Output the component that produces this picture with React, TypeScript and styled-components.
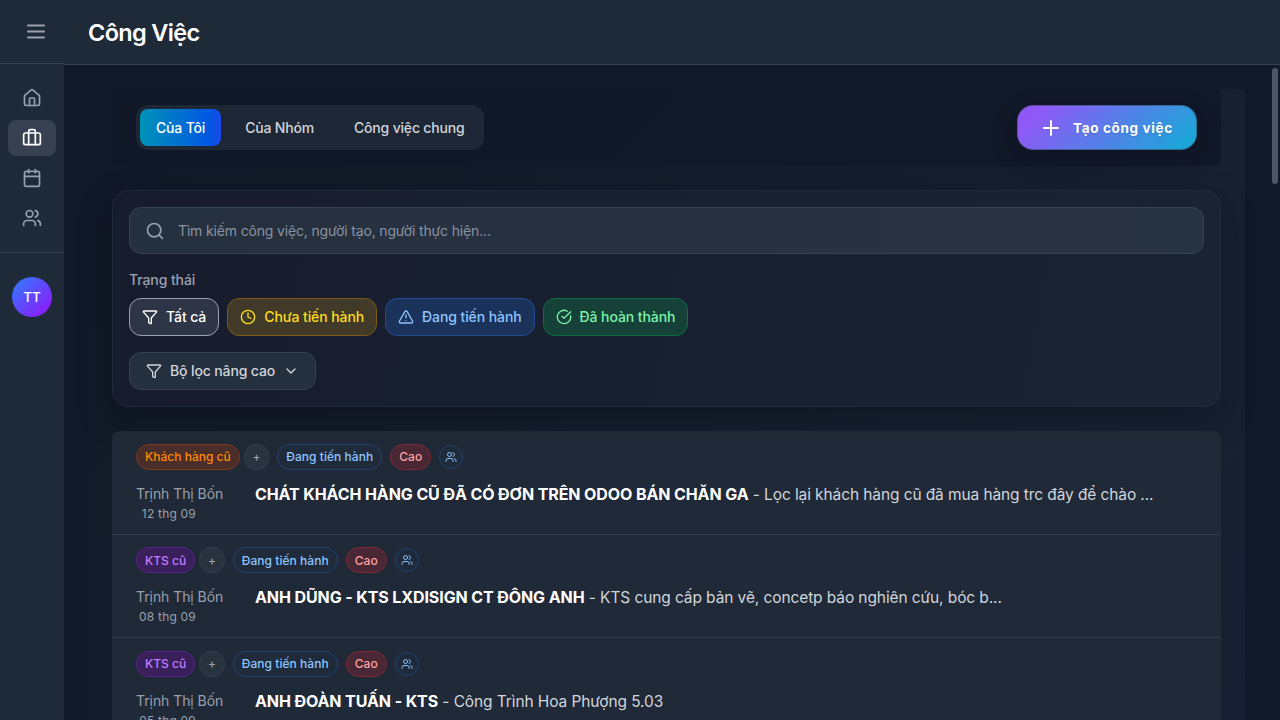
import React from "react";
import styled, { createGlobalStyle, css } from "styled-components";
import {
  House, Calendar, Users, Search, Funnel, Clock,
  TriangleAlert, CircleCheckBig, ChevronDown,
} from "lucide-react";

const Global = createGlobalStyle`
  * { box-sizing: border-box; }
  body { margin: 0; background: #111827; font-family: Inter, "Noto Sans", sans-serif; color: #fff; overflow: hidden; }
  button, input { font-family: inherit; margin: 0; }
  button { cursor: pointer; }
  svg { flex-shrink: 0; display: block; }
`;

const Shell = styled.div`
  display: flex;
  width: 100vw;
  height: 100vh;
  overflow: hidden;
`;

const Sidebar = styled.aside`
  display: flex;
  flex-direction: column;
  width: 64px;
  flex-shrink: 0;
  background: #1f2a39;
`;

const MenuButton = styled.button`
  display: flex;
  align-items: center;
  height: 64px;
  padding: 1px 0 0 24px;
  border: 0;
  border-bottom: 1px solid #374151;
  background: none;
  color: #9ca3af;
`;

const Nav = styled.nav`
  display: flex;
  flex-direction: column;
  gap: 4px;
  padding: 16px 8px;
  border-bottom: 1px solid #374151;
`;

const NavItem = styled.button<{ $active?: boolean }>`
  display: flex;
  align-items: center;
  justify-content: center;
  height: 36px;
  border: 0;
  border-radius: 8px;
  background: ${(p) => (p.$active ? "#374151" : "transparent")};
  color: ${(p) => (p.$active ? "#fff" : "#99a1af")};
`;

const Avatar = styled.div`
  display: flex;
  align-items: center;
  justify-content: center;
  width: 40px;
  height: 40px;
  margin: 24px auto 0;
  border-radius: 50%;
  background: linear-gradient(135deg, #2b7fff, #9810fa);
  font-size: 13.5px;
  font-weight: 500;
`;

const Page = styled.div`
  display: flex;
  flex-direction: column;
  flex: 1;
  min-width: 0;
`;

const Header = styled.header`
  display: flex;
  align-items: center;
  height: 65px;
  flex-shrink: 0;
  padding: 2px 24px 0;
  border-bottom: 1px solid #374151;
  background: #1f2a39;
`;

const Title = styled.h1`
  margin: 0;
  font-size: 23.5px;
  line-height: 32px;
  font-weight: 600;
  letter-spacing: -0.65px;
`;

const Body = styled.div`
  display: flex;
  flex: 1;
  min-height: 0;
`;

const Content = styled.main`
  flex: 1;
  min-width: 0;
  padding: 24px;
  overflow: hidden;
  background: #111827;
`;

const Track = styled.div`
  width: 11px;
  padding: 3px 2px 0 3px;
  background: #101929;
`;

const Thumb = styled.div`
  height: 116px;
  border-radius: 3px;
  background: #4b5563;
`;

const Board = styled.div`
  display: flex;
  flex-direction: column;
  gap: 24px;
  min-height: 1400px;
  padding: 0 24px;
  background: linear-gradient(135deg, #111827 0, #121a28 260px, #182131 950px, #141f31 1300px);
`;

const Toolbar = styled.div`
  display: flex;
  align-items: center;
  justify-content: space-between;
  height: 77px;
  padding: 0 24px;
  border-radius: 8px;
  background: rgba(17, 24, 39, 0.85);
`;

const Tabs = styled.div`
  display: flex;
  gap: 8px;
  padding: 4px;
  border-radius: 12px;
  background: #1e2735;
`;

const Tab = styled.button<{ $active?: boolean }>`
  height: 37px;
  padding: 0 16px;
  border: 0;
  border-radius: 8px;
  background: ${(p) => (p.$active ? "linear-gradient(90deg, #0092b8, #0058e2 85%, #1a49e8)" : "none")};
  color: ${(p) => (p.$active ? "#fff" : "#d1d5db")};
  font-size: 14px;
  font-weight: 500;
  letter-spacing: -0.18px;
`;

const CreateButton = styled.button`
  display: flex;
  align-items: center;
  gap: 10px;
  width: 180px;
  height: 45px;
  padding: 0 0 0 21px;
  border: 1px solid rgba(55, 70, 95, 0.55);
  border-radius: 16px;
  background: linear-gradient(135deg, #9158f8 12%, #1ba6d9 92%) border-box;
  box-shadow: 0 8px 24px rgba(10, 14, 24, 0.3);
  color: #fff;
  font-size: 13.5px;
  font-weight: 700;
  letter-spacing: 0.64px;
  white-space: nowrap;
  text-shadow: 0 1px 2px rgba(0, 0, 0, 0.15);
`;

const FilterCard = styled.section`
  display: flex;
  flex-direction: column;
  align-items: flex-start;
  height: 217px;
  flex-shrink: 0;
  padding: 16px;
  border: 1px solid #1f2a39;
  border-radius: 16px;
  background: linear-gradient(100deg, #171c2d, #182030 45%, #1a2333);
  box-shadow: 0 12px 32px rgba(8, 12, 20, 0.4);
`;

const SearchBox = styled.label`
  display: flex;
  align-items: center;
  gap: 13px;
  align-self: stretch;
  height: 47px;
  padding: 0 15px;
  border: 1px solid #36424f;
  border-radius: 12px;
  background: linear-gradient(90deg, #25303e, #283141 50%, #283341);
  color: #99a1af;
`;

const SearchInput = styled.input`
  flex: 1;
  padding: 0;
  border: 0;
  outline: 0;
  background: none;
  color: #fff;
  font-size: 14px;
  letter-spacing: -0.16px;
  &::placeholder { color: #8a93a1; opacity: 1; }
`;

const FieldLabel = styled.div`
  margin: 16px 0 8px;
  color: #99a1af;
  font-size: 14px;
  line-height: 20px;
  font-weight: 500;
  letter-spacing: -0.1px;
`;

const PillRow = styled.div`
  display: flex;
  gap: 8px;
`;

const tones = {
  all: css`color: #fff; background: #2e3546; border-color: #99a1af;`,
  pending: css`color: #fddc20; background: #423a28; border-color: #7b5b16;`,
  running: css`color: #8ec5ff; background: #1b325b; border-color: #234a93;`,
  done: css`color: #7bf1a8; background: #154138; border-color: #0d6f41;`,
  more: css`color: #d1d5db; background: #24303e; border-color: #36424f;`,
};

const Pill = styled.button<{ $tone: keyof typeof tones }>`
  display: flex;
  align-items: center;
  gap: 8px;
  height: 38px;
  padding: 0 12px;
  border: 1px solid;
  border-radius: 12px;
  font-size: 14px;
  line-height: 20px;
  font-weight: 500;
  letter-spacing: -0.09px;
  ${(p) => tones[p.$tone]}
`;

const MorePill = styled(Pill)`
  margin-top: 16px;
  padding: 0 16px;
  letter-spacing: -0.13px;
`;

const List = styled.ul`
  flex-shrink: 0;
  margin: 0;
  padding: 0;
  list-style: none;
  border-radius: 8px;
  overflow: hidden;
  background: linear-gradient(180deg, #1f2835, #202937 60px);
`;

const Task = styled.li`
  height: 103.5px;
  padding: 12px 24px 0;
  border-bottom: 1px solid #323c4a;
`;

const Tags = styled.div`
  display: flex;
  align-items: center;
  height: 27px;
`;

const tagTones = {
  orange: css`color: #ff8904; background: #4a2e2a; border-color: #7d3a1f;`,
  purple: css`color: #c27aff; background: #39205b; border-color: #5b2191;`,
  status: css`color: #8ec5ff; background: #1f2a3a; border-color: #234370;`,
  high: css`color: #ffa2a2; background: #4a2734; border-color: #7f2936;`,
};

const Tag = styled.span<{ $tone: keyof typeof tagTones }>`
  display: flex;
  align-items: center;
  height: 26px;
  margin-right: 8px;
  padding: 0 8px;
  border: 1px solid;
  border-radius: 13px;
  font-size: 12px;
  font-weight: 500;
  letter-spacing: 0.04px;
  white-space: nowrap;
  ${(p) => tagTones[p.$tone]}
`;

const CategoryTag = styled(Tag)`
  margin-right: 4px;
  letter-spacing: 0.01px;
`;

const AddTag = styled.button`
  width: 25.5px;
  height: 26px;
  margin-right: 8px;
  padding: 0;
  border: 1px solid #343d4b;
  border-radius: 50%;
  background: #29323f;
  color: #99a1af;
  font-size: 12px;
  font-weight: 500;
`;

const TeamBadge = styled.span`
  display: flex;
  align-items: center;
  justify-content: center;
  width: 24px;
  height: 24px;
  border: 1px solid #234370;
  border-radius: 50%;
  background: #1f2a3a;
  color: #8ec5ff;
`;

const Details = styled.div`
  display: flex;
  gap: 32px;
  padding-top: 11.75px;
`;

const Meta = styled.div`
  display: flex;
  flex-direction: column;
  width: 87px;
  flex-shrink: 0;
  color: #99a1af;
  font-size: 14px;
  line-height: 24px;
  letter-spacing: -0.07px;
  white-space: nowrap;
`;

const DateText = styled.span`
  align-self: flex-end;
  margin-right: 27px;
  font-size: 12px;
  line-height: 16px;
  letter-spacing: 0.2px;
`;

const Summary = styled.div`
  color: #d1d5dc;
  font-size: 15.5px;
  line-height: 24px;
  letter-spacing: -0.1px;
  white-space: nowrap;
`;

const TaskTitle = styled.strong`
  color: #fff;
  font-size: 16px;
  font-weight: 700;
  letter-spacing: -0.1px;
`;

const tasks = [
  { category: "Khách hàng cũ", tone: "orange", date: "12 thg 09", title: "CHÁT KHÁCH HÀNG CŨ ĐÃ CÓ ĐƠN TRÊN ODOO BÁN CHĂN GA", note: "Lọc lại khách hàng cũ đã mua hàng trc đây để chào ..." },
  { category: "KTS cũ", tone: "purple", date: "08 thg 09", title: "ANH DŨNG - KTS LXDISIGN CT ĐÔNG ANH", note: "KTS cung cấp bản vẽ, concetp báo nghiên cứu, bóc b..." },
  { category: "KTS cũ", tone: "purple", date: "05 thg 09", title: "ANH ĐOÀN TUẤN - KTS", note: "Công Trình Hoa Phượng 5.03" },
] as const;

const MenuIcon = () => (
  <svg width="24" height="24" viewBox="0 0 24 24" fill="none" stroke="currentColor" strokeWidth="2" strokeLinecap="round">
    <path d="M4 5.5h16M4 11.5h16M4 17.5h16" />
  </svg>
);

const PlusIcon = () => (
  <svg width="24" height="24" viewBox="0 0 24 24" fill="none" stroke="currentColor" strokeWidth="2" strokeLinecap="round">
    <path d="M5 12h14M12 5v14" />
  </svg>
);

const SuitcaseIcon = () => (
  <svg width="20" height="20" viewBox="0 0 24 24" fill="none" stroke="currentColor" strokeWidth="2" strokeLinecap="round" strokeLinejoin="round">
    <path d="M16 20V4a2 2 0 0 0-2-2h-4a2 2 0 0 0-2 2v16" />
    <rect width="20" height="14" x="2" y="6" rx="2" />
  </svg>
);

export default function App() {
  return (
    <>
      <Global />
      <Shell>
        <Sidebar>
          <MenuButton aria-label="Menu"><MenuIcon /></MenuButton>
          <Nav>
            <NavItem><House size={20} /></NavItem>
            <NavItem $active><SuitcaseIcon /></NavItem>
            <NavItem><Calendar size={20} /></NavItem>
            <NavItem><Users size={20} /></NavItem>
          </Nav>
          <Avatar>TT</Avatar>
        </Sidebar>
        <Page>
          <Header><Title>Công Việc</Title></Header>
          <Body>
            <Content>
              <Board>
                <Toolbar>
                  <Tabs>
                    <Tab $active>Của Tôi</Tab>
                    <Tab>Của Nhóm</Tab>
                    <Tab>Công việc chung</Tab>
                  </Tabs>
                  <CreateButton><PlusIcon />Tạo công việc</CreateButton>
                </Toolbar>
                <FilterCard>
                  <SearchBox>
                    <Search size={20} />
                    <SearchInput placeholder="Tìm kiếm công việc, người tạo, người thực hiện..." />
                  </SearchBox>
                  <FieldLabel>Trạng thái</FieldLabel>
                  <PillRow>
                    <Pill $tone="all"><Funnel size={16} />Tất cả</Pill>
                    <Pill $tone="pending"><Clock size={16} />Chưa tiến hành</Pill>
                    <Pill $tone="running"><TriangleAlert size={16} />Đang tiến hành</Pill>
                    <Pill $tone="done"><CircleCheckBig size={16} />Đã hoàn thành</Pill>
                  </PillRow>
                  <MorePill $tone="more"><Funnel size={16} />Bộ lọc nâng cao<ChevronDown size={16} /></MorePill>
                </FilterCard>
                <List>
                  {tasks.map((t) => (
                    <Task key={t.title}>
                      <Tags>
                        <CategoryTag $tone={t.tone}>{t.category}</CategoryTag>
                        <AddTag>+</AddTag>
                        <Tag $tone="status">Đang tiến hành</Tag>
                        <Tag $tone="high">Cao</Tag>
                        <TeamBadge><Users size={12} /></TeamBadge>
                      </Tags>
                      <Details>
                        <Meta>
                          Trịnh Thị Bốn
                          <DateText>{t.date}</DateText>
                        </Meta>
                        <Summary><TaskTitle>{t.title}</TaskTitle> - {t.note}</Summary>
                      </Details>
                    </Task>
                  ))}
                </List>
              </Board>
            </Content>
            <Track><Thumb /></Track>
          </Body>
        </Page>
      </Shell>
    </>
  );
}
